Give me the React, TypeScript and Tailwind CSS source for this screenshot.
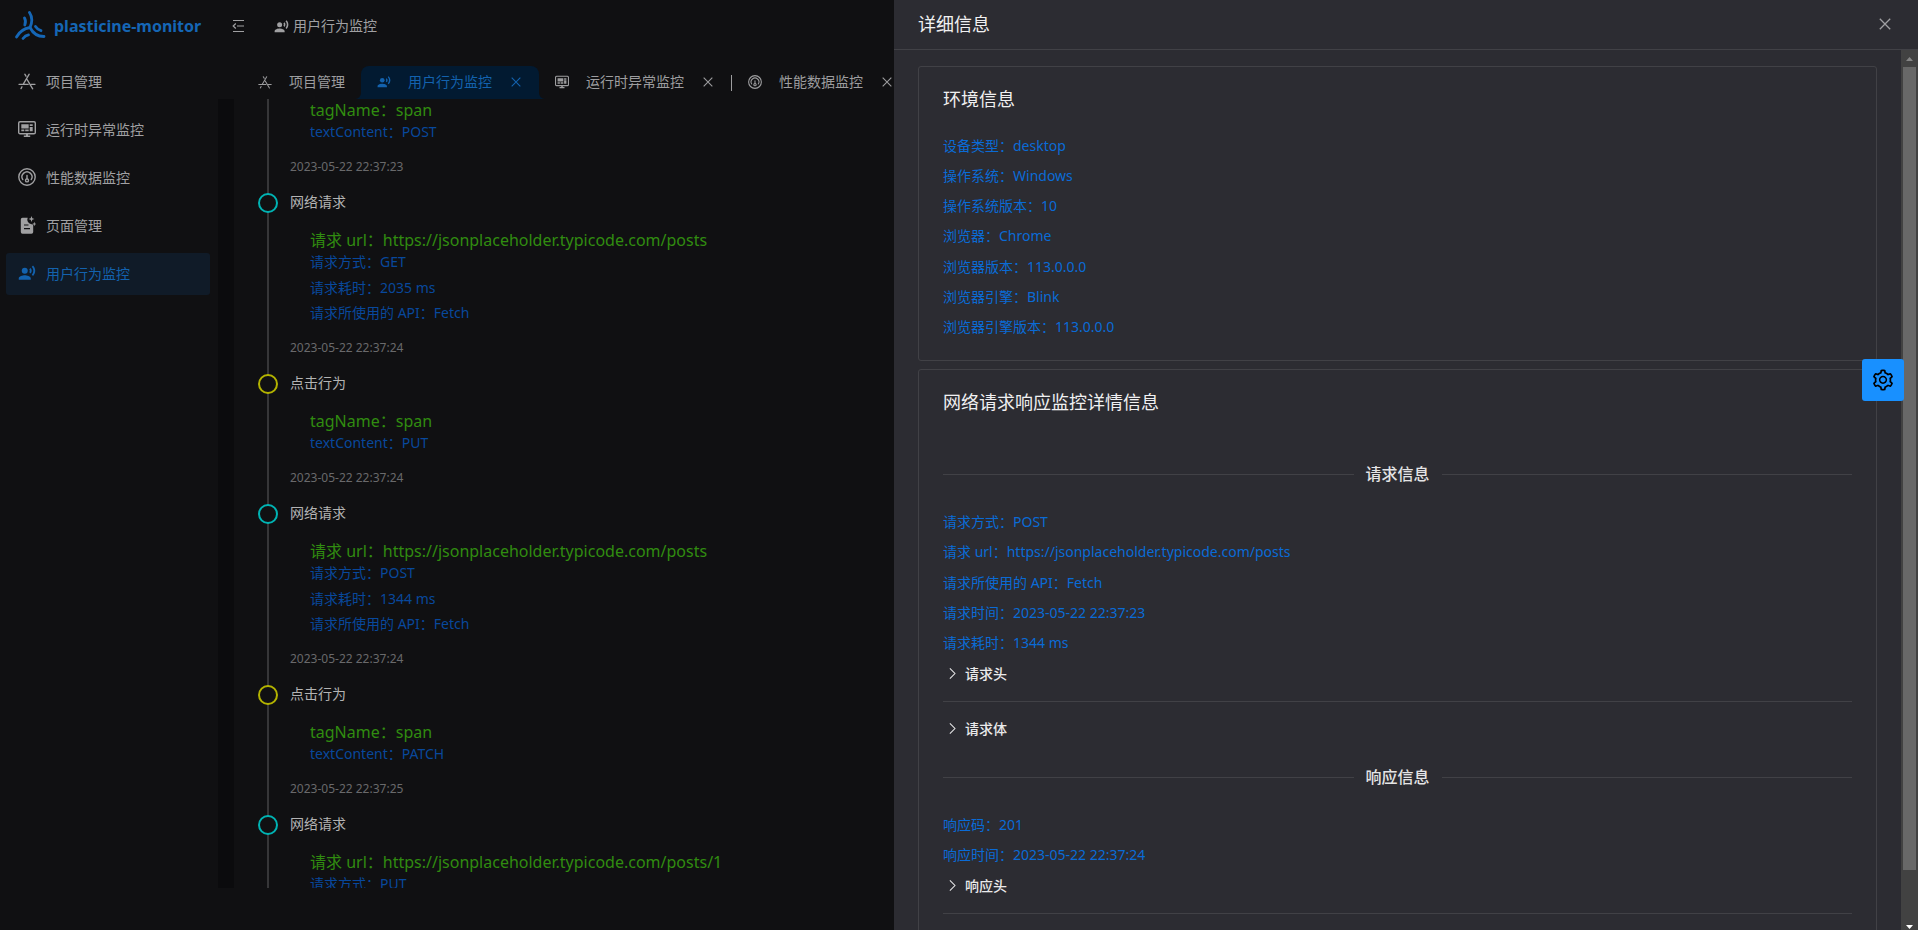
import type { ReactNode } from "react";
import { MdRecordVoiceOver } from "react-icons/md";
import { AiOutlineSetting } from "react-icons/ai";

type IconProps = { className?: string };

function LogoIcon({ className }: IconProps) {
  return (
    <svg viewBox="0 0 32 30" fill="none" stroke="currentColor" strokeWidth="2.8" strokeLinecap="round" className={className} aria-hidden="true">
      <path d="M15.500 1.500c3 4.500 3 9.500 0.500 15" />
      <path d="M10.500 7c1.300 2.200 1.300 4.500 0.300 7" />
      <path d="M2.500 26c3-5.500 7.500-8.500 13.500-9.500 3 6 7.500 9 14 9" />
      <path d="M9 27.500c1.500-2 3-3.200 5.500-3.600" />
      <path d="M21.500 15.500c1.500 2.300 3.500 3.700 5.500 4.200" />
    </svg>
  );
}

function AppStoreIcon({ className }: IconProps) {
  return (
    <svg viewBox="0 0 18 18" fill="none" stroke="currentColor" strokeWidth="1.300" strokeLinecap="round" className={className} aria-hidden="true">
      <path d="M6.800 2.200 8 4.200M11.200 2.200 5.300 12.200M9.300 7.800l5.400 9M1 12.300h9.200M13.200 12.300H17M4 14.800l-1 1.800" />
    </svg>
  );
}

function MonitorIcon({ className }: IconProps) {
  return (
    <svg viewBox="0 0 18 18" className={className} aria-hidden="true">
      <rect x="0.700" y="1.700" width="16.600" height="12" rx="1.300" fill="none" stroke="currentColor" strokeWidth="1.400" />
      <path fill="currentColor" d="M3.300 4.200h7.400v4.300H3.300zM11.700 4.200h3v1.800h-3zM11.700 6.900h3v4.300h-3zM3.300 9.400h3v1.800h-3zM7.200 9.400h3.500v1.800H7.200zM8 13.700h2v2H8zM5.800 15.500h6.400v1.500H5.800z" />
    </svg>
  );
}

function GaugeIcon({ className }: IconProps) {
  return (
    <svg viewBox="0 0 18 18" fill="none" stroke="currentColor" strokeWidth="1.400" strokeLinecap="round" className={className} aria-hidden="true">
      <circle cx="9" cy="9" r="8.200" />
      <path d="M4.800 11.600a5 5 0 1 1 8.400 0M9 7.500V11" />
      <circle cx="9" cy="12.400" r="1.500" />
    </svg>
  );
}

function PageIcon({ className }: IconProps) {
  return (
    <svg viewBox="0 0 18 18" fill="currentColor" className={className} aria-hidden="true">
      <path
        fillRule="evenodd"
        d="M4.500 1.800h5.200a4.600 4.600 0 0 0 4 6.500l1.500.5V16a1.700 1.700 0 0 1-1.700 1.700h-9A1.700 1.700 0 0 1 2.800 16V3.500a1.700 1.700 0 0 1 1.700-1.700zM6 8.400v1.200h4.500V8.400zM6 12v1.200h6V12z"
      />
      <path d="M13.500 0l.8 2.200 2.200.8-2.200.8-.8 2.200-.8-2.200L10.500 3l2.200-.8zM16.300 5.800l.6 1.600 1.600.6-1.600.6-.6 1.600-.6-1.600-1.600-.6 1.600-.6z" />
    </svg>
  );
}

function FoldIcon({ className }: IconProps) {
  return (
    <svg viewBox="0 0 14 14" fill="none" stroke="currentColor" strokeWidth="1.200" className={className} aria-hidden="true">
      <path d="M2 1.500h11M6 7h7M2 12.500h11M4.800 4.500 2.200 7l2.600 2.500" />
    </svg>
  );
}

function CloseIcon({ className }: IconProps) {
  return (
    <svg viewBox="0 0 12 12" fill="none" stroke="currentColor" strokeWidth="1.300" className={className} aria-hidden="true">
      <path d="M0.800 0.800l10.400 10.400M11.200 0.800l-10.400 10.400" />
    </svg>
  );
}

function ChevronIcon({ className }: IconProps) {
  return (
    <svg viewBox="0 0 8 14" fill="none" stroke="currentColor" strokeWidth="1.200" className={className} aria-hidden="true">
      <path d="M1 1.200 6.800 7 1 12.800" />
    </svg>
  );
}

const menu = [
  { label: "项目管理", icon: <AppStoreIcon className="size-[18px]" /> },
  { label: "运行时异常监控", icon: <MonitorIcon className="size-[18px]" /> },
  { label: "性能数据监控", icon: <GaugeIcon className="size-[18px]" /> },
  { label: "页面管理", icon: <PageIcon className="size-[18px]" /> },
  { label: "用户行为监控", icon: <MdRecordVoiceOver className="size-[18px]" />, active: true },
];

type Behavior = { kind: "click" | "network"; head: string; rows: string[]; time: string };

const click = (text: string, time: string): Behavior => ({
  kind: "click",
  head: "tagName：span",
  rows: [`textContent：${text}`],
  time,
});

const network = (url: string, method: string, cost: string, time: string): Behavior => ({
  kind: "network",
  head: `请求 url：${url}`,
  rows: [`请求方式：${method}`, `请求耗时：${cost}`, "请求所使用的 API：Fetch"],
  time,
});

const POSTS = "https://jsonplaceholder.typicode.com/posts";

const behaviors: Behavior[] = [
  click("POST", "2023-05-22 22:37:23"),
  network(POSTS, "GET", "2035 ms", "2023-05-22 22:37:24"),
  click("PUT", "2023-05-22 22:37:24"),
  network(POSTS, "POST", "1344 ms", "2023-05-22 22:37:24"),
  click("PATCH", "2023-05-22 22:37:25"),
  network(`${POSTS}/1`, "PUT", "1302 ms", "2023-05-22 22:37:25"),
];

const environment = [
  "设备类型：desktop",
  "操作系统：Windows",
  "操作系统版本：10",
  "浏览器：Chrome",
  "浏览器版本：113.0.0.0",
  "浏览器引擎：Blink",
  "浏览器引擎版本：113.0.0.0",
];

const request = [
  "请求方式：POST",
  `请求 url：${POSTS}`,
  "请求所使用的 API：Fetch",
  "请求时间：2023-05-22 22:37:23",
  "请求耗时：1344 ms",
];

const response = ["响应码：201", "响应时间：2023-05-22 22:37:24"];

function Tab({ label, icon, active, closable }: { label: string; icon: ReactNode; active?: boolean; closable?: boolean }) {
  return (
    <div
      className={
        active
          ? "relative flex h-full shrink-0 items-center gap-[17px] rounded-t-[8px] bg-[#021a31] px-4 pb-[2px] text-[#1362ae]"
          : "flex h-full shrink-0 items-center gap-[17px] px-4 pb-[2px] text-[#9d9d9f]"
      }
    >
      {active && (
        <>
          <svg viewBox="0 0 6 6" className="absolute bottom-0 -left-1.5 size-1.5" aria-hidden="true">
            <path d="M6 0v6H0a6 6 0 0 0 6-6z" fill="#021a31" />
          </svg>
          <svg viewBox="0 0 6 6" className="absolute -right-1.5 bottom-0 size-1.5" aria-hidden="true">
            <path d="M0 0v6h6a6 6 0 0 1-6-6z" fill="#021a31" />
          </svg>
        </>
      )}
      <button type="button" className="flex items-center gap-[17px] whitespace-nowrap">
        {icon}
        {label}
      </button>
      {closable && (
        <button type="button" aria-label={`关闭${label}`} className="flex size-[14px] items-center justify-center">
          <CloseIcon className="size-[10px]" />
        </button>
      )}
    </div>
  );
}

function TimelineItem({ item }: { item: Behavior }) {
  const isNetwork = item.kind === "network";
  return (
    <li className="relative pb-[13px] pl-9">
      <span className="absolute -bottom-3 left-[13px] top-3 w-[2px] bg-[#363638]" />
      <span
        className={
          isNetwork
            ? "absolute left-1 top-[2px] z-10 size-5 rounded-full border-2 border-[#00b3b3] bg-[#101012]"
            : "absolute left-1 top-[2px] z-10 size-5 rounded-full border-2 border-[#b3b300] bg-[#101012]"
        }
      />
      <h3 className="text-[14px] leading-[22px] text-[#b3b3b3]">{isNetwork ? "网络请求" : "点击行为"}</h3>
      <div className="mb-[13px] mt-4 pl-5">
        <p className="text-[16px] leading-[22px] text-[#308c10]">{item.head}</p>
        <div
          className={
            isNetwork
              ? "flex h-[73px] flex-col justify-between text-[14px] leading-[22px] text-[#08489c]"
              : "text-[14px] leading-[22px] text-[#08489c]"
          }
        >
          {item.rows.map((row) => (
            <p key={row}>{row}</p>
          ))}
        </div>
      </div>
      <time className="block text-[12px] leading-[22px] text-[#69696b]">{item.time}</time>
    </li>
  );
}

function Divider({ children }: { children: ReactNode }) {
  return (
    <div className="flex h-6 items-center gap-3 text-[16px] font-medium text-[#e4e4e5] before:h-px before:flex-1 before:bg-[#414146] after:h-px after:flex-1 after:bg-[#414146]">
      {children}
    </div>
  );
}

function Collapse({ children }: { children: ReactNode }) {
  return (
    <button type="button" className="flex h-[22px] items-center gap-[9px] pl-[6px] text-[14px] font-medium text-[#e9e9ea]">
      <ChevronIcon className="h-[13px] w-[7px]" />
      {children}
    </button>
  );
}

function DetailDrawer() {
  return (
    <aside className="fixed inset-y-0 right-0 z-20 flex w-[1024px] max-w-full flex-col bg-[#2c2c32]" aria-label="详细信息">
      <header className="flex h-[50px] shrink-0 items-center justify-between border-b border-[#414146] pb-[2px] pl-6 pr-[26px]">
        <h2 className="text-[18px] leading-7 text-[#f0f0f1]">详细信息</h2>
        <button type="button" aria-label="关闭" className="flex size-[14px] items-center justify-center text-[#a0a0a3]">
          <CloseIcon className="size-3" />
        </button>
      </header>
      <div className="flex min-h-0 flex-1">
        <div className="flex min-w-0 flex-1 flex-col gap-2 overflow-hidden px-6 pt-4">
          <section className="shrink-0 rounded-[3px] border border-[#414146] px-6 pb-[22px] pt-[18px]">
            <h3 className="text-[18px] leading-7 text-[#f0f0f1]">环境信息</h3>
            <div className="mt-[22px] flex h-[203px] flex-col justify-between text-[14px] leading-[22px] text-[#0a6bd6]">
              {environment.map((row) => (
                <p key={row}>{row}</p>
              ))}
            </div>
          </section>
          <section className="shrink-0 rounded-[3px] border border-[#414146] px-6 pb-6 pt-[18px]">
            <h3 className="text-[18px] leading-7 text-[#f0f0f1]">网络请求响应监控详情信息</h3>
            <div className="mt-[46px]">
              <Divider>请求信息</Divider>
            </div>
            <div className="mt-[25px] flex h-[143px] flex-col justify-between text-[14px] leading-[22px] text-[#0a6bd6]">
              {request.map((row) => (
                <p key={row}>{row}</p>
              ))}
            </div>
            <div className="mt-2 border-b border-[#414146] pb-[17px]">
              <Collapse>请求头</Collapse>
            </div>
            <div className="mt-[15px]">
              <Collapse>请求体</Collapse>
            </div>
            <div className="mt-[26px]">
              <Divider>响应信息</Divider>
            </div>
            <div className="mt-[25px] flex flex-col gap-2 text-[14px] leading-[22px] text-[#0a6bd6]">
              {response.map((row) => (
                <p key={row}>{row}</p>
              ))}
            </div>
            <div className="mt-2 border-b border-[#414146] pb-[17px]">
              <Collapse>响应头</Collapse>
            </div>
            <div className="mt-[15px]">
              <Collapse>响应体</Collapse>
            </div>
          </section>
        </div>
        <div className="flex w-[17px] shrink-0 flex-col items-center bg-[#424242]" aria-hidden="true">
          <svg viewBox="0 0 17 17" className="size-[17px] shrink-0">
            <path d="M5 11h7L8.500 7z" fill="#868686" />
          </svg>
          <div className="min-h-0 w-[13px] flex-1 bg-[#686868]" />
          <div className="h-[43px] shrink-0" />
          <svg viewBox="0 0 17 17" className="size-[17px] shrink-0">
            <path d="M5 12h7L8.500 16z" fill="#ffffff" />
          </svg>
        </div>
      </div>
    </aside>
  );
}

export default function App() {
  return (
    <div className="flex h-screen flex-col overflow-hidden bg-[#101012] font-['Noto_Sans','Noto_Sans_CJK_SC',sans-serif] text-[14px] text-[#a0a0a2]">
      <header className="flex h-[54px] shrink-0 items-center pb-[2px]">
        <div className="flex w-[218px] shrink-0 items-center gap-2 pl-[14px] text-[#1566b5]">
          <LogoIcon className="h-[30px] w-8" />
          <h1 className="text-[16px] font-bold leading-6">plasticine-monitor</h1>
        </div>
        <button type="button" aria-label="折叠菜单" className="ml-[13px]">
          <FoldIcon className="size-[14px]" />
        </button>
        <nav className="ml-[29px] flex items-center gap-1" aria-label="面包屑">
          <MdRecordVoiceOver className="size-[15px]" />
          <span className="leading-[22px]">用户行为监控</span>
        </nav>
      </header>

      <div className="flex min-h-0 flex-1">
        <nav className="flex w-[218px] shrink-0 flex-col gap-[6px] pl-[6px] pr-2 pt-[7px]" aria-label="主菜单">
          {menu.map((item) => (
            <a
              key={item.label}
              href="#"
              className={
                item.active
                  ? "flex h-[42px] items-center gap-[10px] rounded-[3px] bg-[#101b28] pb-[2px] pl-3 text-[#1362ae]"
                  : "flex h-[42px] items-center gap-[10px] rounded-[3px] pb-[2px] pl-3"
              }
            >
              {item.icon}
              {item.label}
            </a>
          ))}
        </nav>

        <main className="flex min-w-0 flex-1 flex-col pb-[42px] pt-3">
          <div className="flex h-[33px] shrink-0 items-center pl-6">
            <Tab label="项目管理" icon={<AppStoreIcon className="size-[14px]" />} />
            <Tab label="用户行为监控" icon={<MdRecordVoiceOver className="size-[14px]" />} active closable />
            <Tab label="运行时异常监控" icon={<MonitorIcon className="size-[14px]" />} closable />
            <span className="h-4 w-px bg-[#9d9d9f]" />
            <Tab label="性能数据监控" icon={<GaugeIcon className="size-[14px]" />} closable />
          </div>
          <div className="flex min-h-0 flex-1">
            <div className="w-4 shrink-0 bg-[#0b0b0d]" />
            <div className="min-w-0 flex-1 overflow-hidden pl-5">
              <ol className="-mt-[38px]">
                {behaviors.map((item, index) => (
                  <TimelineItem key={index} item={item} />
                ))}
              </ol>
            </div>
          </div>
        </main>
      </div>

      <DetailDrawer />

      <button
        type="button"
        aria-label="设置"
        className="fixed right-[14px] top-[359px] z-30 flex size-[42px] items-center justify-center rounded-[3px] bg-[#1890ff] text-black"
      >
        <AiOutlineSetting className="size-6" />
      </button>
    </div>
  );
}
